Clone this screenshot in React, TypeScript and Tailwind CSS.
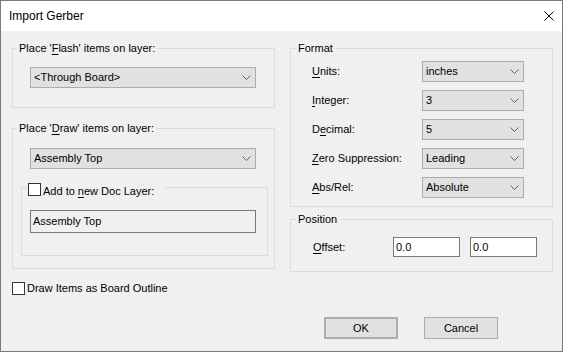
import React from "react";

function Chevron() {
  return (
    <svg width="9" height="5" viewBox="0 0 9 5" className="shrink-0">
      <polyline points="0.5,0.5 4.5,4.5 8.5,0.5" fill="none" stroke="#606060" strokeWidth="1" />
    </svg>
  );
}

function Combo({ value, w }: { value: string; w: string }) {
  return (
    <div className={`flex items-center justify-between h-[21px] border border-[#adadad] bg-[#e1e1e1] pl-[3px] pr-[4px] ${w}`}>
      <span className="leading-[13px]">{value}</span>
      <Chevron />
    </div>
  );
}

function U({ c }: { c: string }) {
  return <span className="underline decoration-1 underline-offset-[2px]">{c}</span>;
}

function Checkbox() {
  return <div className="w-[13px] h-[13px] border border-[#333333] bg-white shrink-0" />;
}

function Legend({ children, ml }: { children: React.ReactNode; ml: string }) {
  return <legend className={`${ml} px-[2px] leading-[13px] h-[13px]`}>{children}</legend>;
}

export default function App() {
  return (
    <div className="w-[563px] h-[352px] border border-[#7a7a7a] bg-[#f0f0f0] flex flex-col font-['Liberation_Sans',Arial,sans-serif] text-[11px] text-black">
      {/* Title bar */}
      <div className="h-[30px] bg-white flex items-center justify-between pl-[8px] pr-[8px] shrink-0">
        <span className="text-[12px] leading-[16px]">Import Gerber</span>
        <svg width="10" height="10" viewBox="0 0 10 10">
          <path d="M0.5 0.5 L9.5 9.5 M9.5 0.5 L0.5 9.5" stroke="#000" strokeWidth="1" fill="none" />
        </svg>
      </div>

      {/* Body */}
      <div className="flex flex-col pl-[11px] pr-[9px] pt-[11px]">
        <div className="flex gap-[15px] items-start">
          {/* Left column */}
          <div className="flex flex-col w-[263px]">
            <fieldset className="border border-[#dcdcdc] w-[263px] pb-[19px]">
              <Legend ml="ml-[4px]">
                Place '<U c="F" />lash' items on layer:
              </Legend>
              <div className="mt-[12px] ml-[17px]">
                <Combo value="<Through Board>" w="w-[226px]" />
              </div>
            </fieldset>

            <fieldset className="border border-[#dcdcdc] w-[263px] mt-[14px] pb-[12px]">
              <Legend ml="ml-[4px]">
                Place '<U c="D" />raw' items on layer:
              </Legend>
              <div className="mt-[13px] ml-[17px]">
                <Combo value="Assembly Top" w="w-[226px]" />
              </div>
              <fieldset className="border border-[#dcdcdc] w-[247px] ml-[8px] mt-[8px] pb-[22px]">
                <legend className="ml-[6px] pr-[10px] h-[21px]">
                  <div className="flex items-start h-[21px] gap-[2px]">
                    <div className="mt-[6px]">
                      <Checkbox />
                    </div>
                    <span className="mt-[8px] leading-[13px]">
                      Add to <U c="n" />ew Doc Layer:
                    </span>
                  </div>
                </legend>
                <div className="mt-[12px] ml-[8px] w-[226px] h-[23px] border border-[#7a7a7a] bg-[#f0f0f0] flex items-center pl-[2px]">
                  <span className="leading-[13px]">Assembly Top</span>
                </div>
              </fieldset>
            </fieldset>

            <div className="flex items-center gap-[2px] mt-[13px]">
              <Checkbox />
              <span className="leading-[13px]">Draw Items as Board Outline</span>
            </div>
          </div>

          {/* Right column */}
          <div className="flex flex-col w-[263px]">
            <fieldset className="border border-[#dcdcdc] w-[263px] pb-[8px]">
              <Legend ml="ml-[5px]">Format</Legend>
              <div className="mt-[6px] pl-[21px] grid grid-cols-[110px_102px] gap-y-[8px] items-center">
                <span><U c="U" />nits:</span>
                <Combo value="inches" w="w-[102px]" />
                <span><U c="I" />nteger:</span>
                <Combo value="3" w="w-[102px]" />
                <span>D<U c="e" />cimal:</span>
                <Combo value="5" w="w-[102px]" />
                <span><U c="Z" />ero Suppression:</span>
                <Combo value="Leading" w="w-[102px]" />
                <span><U c="A" />bs/Rel:</span>
                <Combo value="Absolute" w="w-[102px]" />
              </div>
            </fieldset>

            <fieldset className="border border-[#dcdcdc] w-[263px] mt-[6px] pb-[14px]">
              <Legend ml="ml-[5px]">Position</Legend>
              <div className="mt-[11px] pl-[22px] flex items-center">
                <span className="w-[80px]"><U c="O" />ffset:</span>
                <div className="w-[67px] h-[20px] border border-[#7a7a7a] bg-white flex items-center pl-[2px]">
                  <span className="leading-[13px]">0.0</span>
                </div>
                <div className="w-[67px] h-[20px] border border-[#7a7a7a] bg-white flex items-center pl-[2px] ml-[10px]">
                  <span className="leading-[13px]">0.0</span>
                </div>
              </div>
            </fieldset>
          </div>
        </div>

        {/* Buttons */}
        <div className="flex justify-end gap-[26px] mt-[22px] pr-[55px]">
          <button className="w-[74px] h-[22px] border-2 border-[#adadad] bg-[#e1e1e1] leading-[13px]">OK</button>
          <button className="w-[74px] h-[22px] border border-[#adadad] bg-[#e1e1e1] leading-[13px]">Cancel</button>
        </div>
      </div>
    </div>
  );
}
